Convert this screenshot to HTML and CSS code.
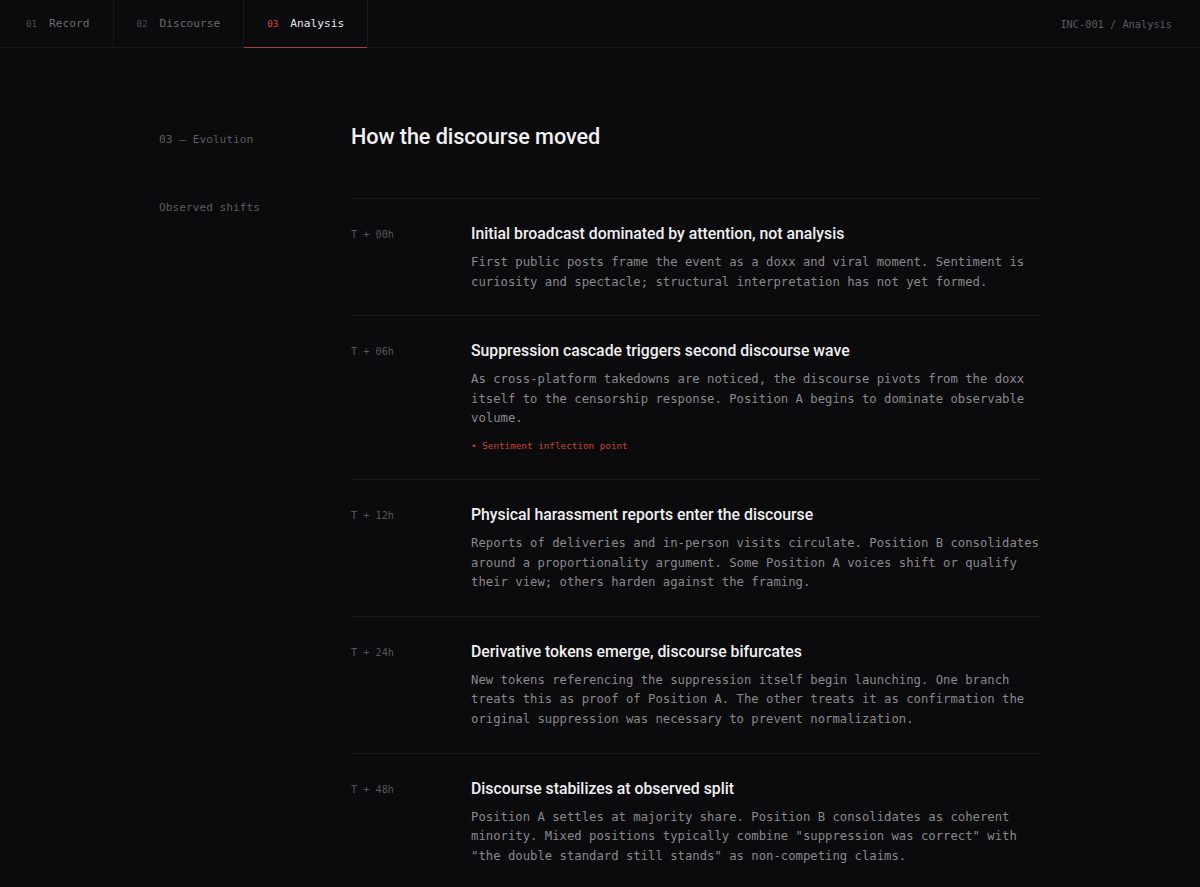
FILE: index.html
```html
<!DOCTYPE html>
<html lang="en">
<head>
  <meta charset="UTF-8">
  <title>INC-001 / Analysis</title>
  <link rel="stylesheet" href="styles.css">
</head>
<body>

  <nav class="topbar">
    <div class="tabs">
      <a class="tab"><span class="tab-num">01</span>Record</a>
      <a class="tab"><span class="tab-num">02</span>Discourse</a>
      <a class="tab active"><span class="tab-num">03</span>Analysis</a>
    </div>
    <div class="crumb">INC-001 / Analysis</div>
  </nav>

  <main class="page">
    <aside class="side">
      <div class="side-label">03 — Evolution</div>
      <div class="side-sub">Observed shifts</div>
    </aside>

    <section class="content">
      <h1>How the discourse moved</h1>

      <ol class="timeline">
        <li class="entry">
          <div class="time">T + 00h</div>
          <div class="body">
            <h3>Initial broadcast dominated by attention, not analysis</h3>
            <p>First public posts frame the event as a doxx and viral moment. Sentiment is curiosity and spectacle; structural interpretation has not yet formed.</p>
          </div>
        </li>
        <li class="entry">
          <div class="time">T + 06h</div>
          <div class="body">
            <h3>Suppression cascade triggers second discourse wave</h3>
            <p>As cross-platform takedowns are noticed, the discourse pivots from the doxx itself to the censorship response. Position A begins to dominate observable volume.</p>
            <div class="marker">• Sentiment inflection point</div>
          </div>
        </li>
        <li class="entry">
          <div class="time">T + 12h</div>
          <div class="body">
            <h3>Physical harassment reports enter the discourse</h3>
            <p>Reports of deliveries and in-person visits circulate. Position B consolidates around a proportionality argument. Some Position A voices shift or qualify their view; others harden against the framing.</p>
          </div>
        </li>
        <li class="entry">
          <div class="time">T + 24h</div>
          <div class="body">
            <h3>Derivative tokens emerge, discourse bifurcates</h3>
            <p>New tokens referencing the suppression itself begin launching. One branch treats this as proof of Position A. The other treats it as confirmation the original suppression was necessary to prevent normalization.</p>
          </div>
        </li>
        <li class="entry">
          <div class="time">T + 48h</div>
          <div class="body">
            <h3>Discourse stabilizes at observed split</h3>
            <p>Position A settles at majority share. Position B consolidates as coherent minority. Mixed positions typically combine "suppression was correct" with "the double standard still stands" as non-competing claims.</p>
          </div>
        </li>
      </ol>
    </section>
  </main>

</body>
</html>
```

FILE: styles.css
```css
* {
  box-sizing: border-box;
  margin: 0;
  padding: 0;
}

body {
  background: #0b0a0c;
  color: #e8e8e8;
  font-family: 'DejaVu Sans Mono', monospace;
  min-height: 100vh;
}

/* top navigation */
.topbar {
  display: flex;
  justify-content: space-between;
  align-items: stretch;
  height: 48px;
  border-bottom: 1px solid #1a191c;
  padding: 0 28px 0 3px;
}

.tabs {
  display: flex;
}

.tab {
  display: flex;
  align-items: center;
  padding: 0 23px;
  font-size: 11.2px;
  color: #6c6b70;
  border-right: 1px solid #19181b;
  position: relative;
}

.tab-num {
  font-size: 9.2px;
  color: #4e4d52;
  margin-right: 12px;
}

.tab.active {
  color: #e9e9ec;
}

.tab.active .tab-num {
  color: #d9493d;
}

.tab.active::after {
  content: "";
  position: absolute;
  left: 0;
  right: 0;
  bottom: -1px;
  height: 1px;
  background: #a8413a;
}

.crumb {
  display: flex;
  align-items: center;
  font-size: 10.3px;
  color: #5c5b60;
}

/* page body */
.page {
  display: flex;
  padding: 75px 0 0 159px;
}

.side {
  width: 192px;
  flex-shrink: 0;
  padding-top: 10px;
}

.side-label,
.side-sub {
  font-size: 11.2px;
  color: #5d5c61;
}

.side-sub {
  margin-top: 55px;
}

.content {
  width: 689px;
}

h1 {
  font-family: Roboto, 'Liberation Sans', sans-serif;
  font-size: 21.7px;
  font-weight: 500;
  color: #f2f2f4;
  letter-spacing: -0.1px;
  line-height: 28px;
  padding-bottom: 47px;
  border-bottom: 1px solid #19181b;
}

.timeline {
  list-style: none;
}

.entry {
  display: flex;
  padding: 25px 0 23px;
  border-bottom: 1px solid #19181b;
}

.entry:last-child {
  border-bottom: none;
}

.time {
  width: 120px;
  flex-shrink: 0;
  font-size: 10.2px;
  color: #58575c;
  padding-top: 5px;
}

.body {
  flex: 1;
}

.body h3 {
  font-family: Roboto, 'Liberation Sans', sans-serif;
  font-size: 15.8px;
  font-weight: 500;
  color: #f0f0f2;
  line-height: 20px;
  margin-bottom: 9px;
}

.body p {
  font-size: 12.25px;
  line-height: 19.6px;
  color: #8a898e;
}

.marker {
  margin: 11px 0 5px;
  font-size: 9.3px;
  color: #c7453a;
}
```
